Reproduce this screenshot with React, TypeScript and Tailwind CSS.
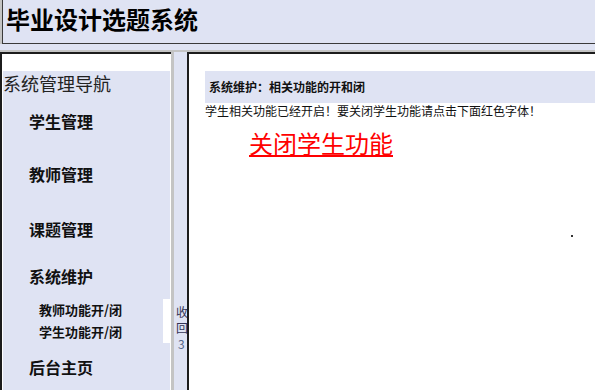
const navItems = [
  { label: '学生管理', h: 'h-[55px]' },
  { label: '教师管理', h: 'h-[52px]' },
  { label: '课题管理', h: 'h-[57px]' },
];

const App = () => {
  return (
    <div className="w-[595px] h-[390px] overflow-hidden bg-[#dfe3f3] flex flex-col font-['Noto_Sans_CJK_SC',sans-serif] text-[#111]">
      {/* 顶部 frame */}
      <div className="h-[44px] border-l-2 border-[#c4c4c4]">
        <div className="h-full border-l border-b border-[#3a3a3a] pl-[3px] pt-[5px]">
          <h1 className="text-[24px] leading-[28px] font-bold text-black">毕业设计选题系统</h1>
        </div>
      </div>

      <div className="h-[6px]" />

      {/* 下半部分 */}
      <div className="flex-1 flex border-t-2 border-[#c4c4c4] min-h-0">
        {/* 左侧导航 frame */}
        <div className="w-[171px] bg-white border-l-2 border-t-2 border-[#1c1c1c] pt-[17px] px-px flex flex-col">
          <div className="flex-1 bg-[#dfe3f3]">
            <div className="h-[22px] text-[18px] leading-[24px] text-[#222]">系统管理导航</div>
            {navItems.map((item) => (
              <div key={item.label} className={`${item.h} flex items-center pl-[26px] text-[16px] font-bold`}>
                {item.label}
              </div>
            ))}
            <div className="h-[38px] flex items-center pl-[26px] text-[16px] font-bold">系统维护</div>
            <div className="h-[4px]" />
            <div className="bg-white">
              <div className="w-[160px] bg-[#dfe3f3] pl-[36px] text-[13px] font-bold">
                <div className="h-[22px] leading-[22px]">教师功能开/闭</div>
                <div className="h-[22px] leading-[22px]">学生功能开/闭</div>
              </div>
            </div>
            <div className="h-[11px]" />
            <div className="h-[26px] flex items-center pl-[26px] text-[16px] font-bold">后台主页</div>
          </div>
        </div>

        {/* 中间收回栏 */}
        <div className="w-[3px] bg-[#c4c4c4]" />
        <div className="w-[13px] overflow-hidden pl-[2px] pt-[252px] text-[12px] leading-[16px] text-[#333355]">
          <div className="w-[12px] break-all">收回</div>
          <div className="w-[12px] text-[#556688] pl-[2px]">3</div>
        </div>

        {/* 右侧内容 frame */}
        <div className="relative flex-1 bg-white border-l-2 border-t-2 border-[#1c1c1c] pt-[17px] pl-[16px]">
          <div className="h-[32px] bg-[#dfe3f3] flex items-center pl-[4px] text-[12px] font-bold">
            系统维护：相关功能的开和闭
          </div>
          <p className="text-[12px] leading-[16px] text-[#111]">学生相关功能已经开启！要关闭学生功能请点击下面红色字体！</p>
          <a href="#" className="block mt-[10px] ml-[44px] w-fit text-[24px] leading-[28px] text-[#ff0000] underline">
            关闭学生功能
          </a>
          <span className="absolute left-[382px] top-[181px] w-[2px] h-[2px] bg-[#333]" />
        </div>
      </div>
    </div>
  );
};

export default App;
